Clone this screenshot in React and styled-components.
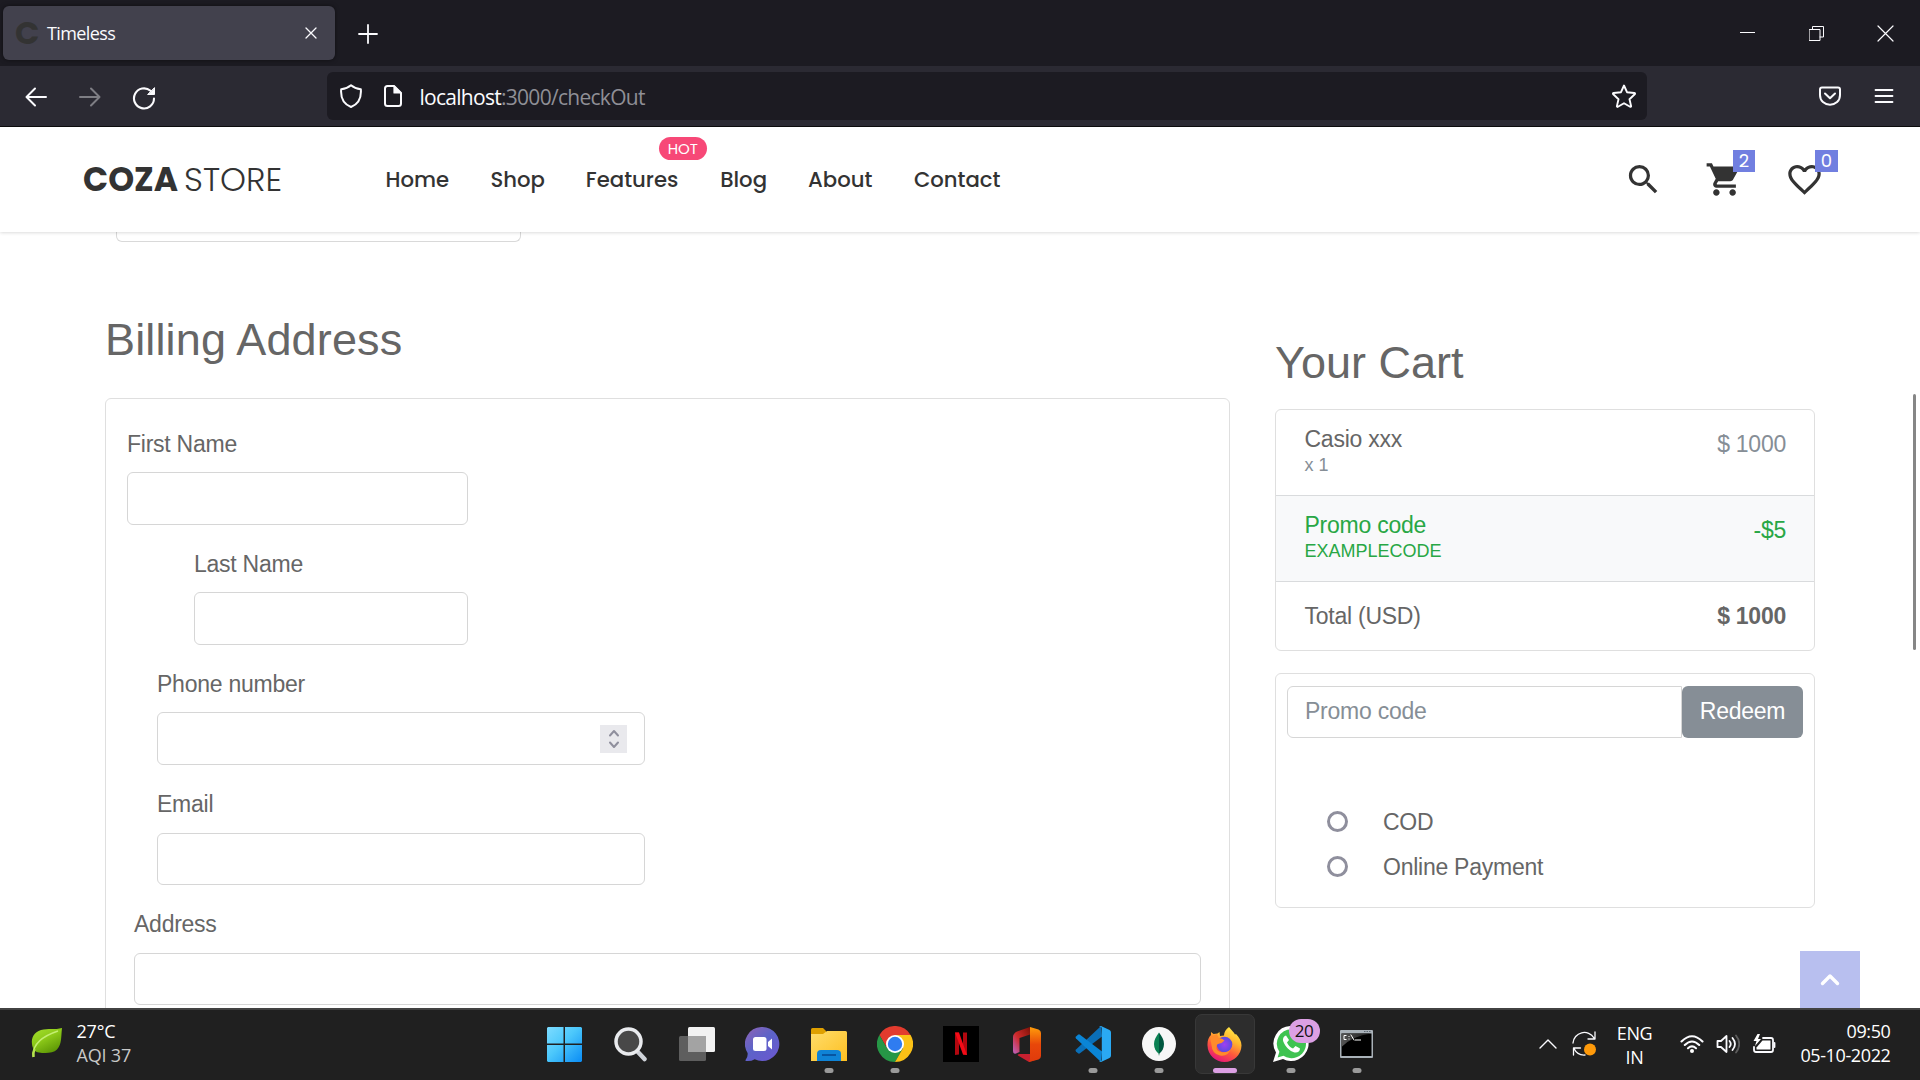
import React from "react";
import styled, { createGlobalStyle, css } from "styled-components";
import { MdSearch, MdShoppingCart, MdFavoriteBorder } from "react-icons/md";

const ui = `"Segoe UI", "Open Sans", "Noto Sans", sans-serif`;
const arial = `Arial, "Liberation Sans", sans-serif`;
const poppins = `Poppins, Inter, sans-serif`;

const Global = createGlobalStyle`
  *, *::before, *::after { box-sizing: border-box; }
  body { margin: 0; background: #fff; overflow: hidden; }
  svg { display: block; flex: none; }
`;

const Screen = styled.div`
  width: 1920px;
  height: 1080px;
  display: flex;
  flex-direction: column;
  overflow: hidden;
`;

/* ---------- Browser chrome ---------- */
const TabBar = styled.div`
  height: 66px;
  flex: none;
  display: flex;
  align-items: center;
  padding-left: 3px;
  background: #1c1b22;
`;
const Tab = styled.div`
  width: 332px;
  height: 54px;
  display: flex;
  align-items: center;
  padding: 0 18.5px 1px 12px;
  border-radius: 6px;
  background: #42414d;
  box-shadow: 0 0 4px rgba(0, 0, 0, 0.5);
`;
const Favicon = styled.span`
  width: 24px;
  margin-right: 8px;
  font: 700 32px/30px ${poppins};
  color: #333;
`;
const TabTitle = styled.span`
  flex: 1;
  font: 18px/24px ${ui};
  letter-spacing: ${(p) => p.$ls || 0}px;
  color: #fbfbfe;
`;
const NewTab = styled.div`
  width: 65px;
  display: flex;
  justify-content: center;
  padding-top: 2px;
`;
const WindowControls = styled.div`
  margin-left: auto;
  display: flex;
`;
const WindowButton = styled.div`
  width: 69px;
  height: 66px;
  display: flex;
  align-items: center;
  justify-content: center;
`;
const Toolbar = styled.div`
  height: 61px;
  flex: none;
  display: flex;
  align-items: center;
  padding: 0 9px;
  background: #2b2a33;
  border-bottom: 1px solid #0c0c0d;
`;
const ToolButton = styled.div`
  width: 54px;
  height: 48px;
  display: flex;
  align-items: center;
  justify-content: center;
  padding-top: ${(p) => p.$drop || 0}px;
  opacity: ${(p) => (p.$dim ? 0.4 : 1)};
`;
const UrlBar = styled.div`
  width: 1320px;
  height: 48px;
  margin: 0 auto 0 156px;
  display: flex;
  align-items: center;
  padding: 0 11px 0 12px;
  border-radius: 6px;
  background: #1c1b22;
`;
const UrlIcons = styled.div`
  display: flex;
  gap: 18px;
  margin-right: 14.5px;
`;
const Url = styled.span`
  flex: 1;
  padding-top: 1px;
  font: 21px/30px ${ui};
  letter-spacing: ${(p) => p.$ls || 0}px;
  color: #8f8f96;
`;
const Host = styled.span`
  color: #fbfbfe;
`;

/* ---------- Page ---------- */
const Page = styled.div`
  position: relative;
  height: 881px;
  flex: none;
  overflow: hidden;
  background: #fff;
`;
const Header = styled.header`
  position: relative;
  z-index: 1;
  height: 105px;
  display: flex;
  align-items: center;
  padding: 0 96px 0 83px;
  background: #fff;
  box-shadow: 0 0 4px rgba(0, 0, 0, 0.22);
`;
const Logo = styled.div`
  width: 302.5px;
  display: flex;
  font: 33px/40px ${poppins};
  color: #333;
`;
const LogoBold = styled.span`
  width: 101px;
  font-weight: 700;
`;
const LogoLight = styled.span`
  font-weight: 300;
`;
const Nav = styled.nav`
  display: flex;
  gap: 42.4px;
`;
const NavLink = styled.a`
  position: relative;
  width: ${(p) => p.$w}px;
  white-space: nowrap;
  font: 500 21.2px/30px ${poppins};
  color: #333;
`;
const HotBadge = styled.span`
  position: absolute;
  left: 73px;
  top: -28px;
  width: 48px;
  height: 23px;
  border-radius: 12px;
  background: #f74877;
  color: #fff;
  text-align: center;
  font: 400 15px/23px ${poppins};
`;
const HeaderIcons = styled.div`
  margin-left: auto;
  display: flex;
  gap: 41px;
  color: #333;
`;
const HeaderIcon = styled.div`
  position: relative;
  width: 39px;
  height: 39px;
  margin-right: ${(p) => p.$right || 0}px;
`;
const CountBadge = styled.span`
  position: absolute;
  left: ${(p) => p.$left}px;
  top: -10px;
  width: ${(p) => p.$w}px;
  height: 22px;
  background: #717fe0;
  color: #fff;
  text-align: center;
  font: 400 18px/22px ${poppins};
`;

const Main = styled.main`
  display: grid;
  grid-template-columns: 1125px 540px;
  column-gap: 45px;
  padding-left: 105px;
  font-family: ${arial};
  font-size: 23px;
  letter-spacing: -0.25px;
  color: #666;
`;
const Column = styled.section`
  padding-top: ${(p) => p.$top || 0}px;
`;
const PreviousField = styled.div`
  width: 405px;
  height: 10px;
  margin: 0 0 71px 11px;
  border: 1px solid #d9d9d9;
  border-top: 0;
  border-radius: 0 0 6px 6px;
`;
const Heading = styled.h2`
  margin: 0 0 ${(p) => p.$gap}px;
  font-size: 45px;
  font-weight: 400;
  line-height: 54px;
  letter-spacing: ${(p) => p.$ls || 0}px;
`;
const card = css`
  border: 1px solid #dfdfdf;
  border-radius: 6px;
`;
const FormCard = styled.form`
  ${card}
  height: 900px;
  padding: 28.6px 27px 0 21px;
`;
const Field = styled.label`
  display: block;
  margin: 0 0 22.9px ${(p) => p.$indent || 0}px;
  width: ${(p) => p.$w}px;
  line-height: 32px;
`;
const control = css`
  height: 52.75px;
  border: 1px solid #d6d6d6;
  background: #fff;
  outline: 0;
`;
const Control = styled.span`
  ${control}
  display: flex;
  align-items: center;
  justify-content: flex-end;
  padding-right: 17px;
  margin-top: 12.5px;
  border-radius: 6px;
`;
const Spinner = styled.span`
  width: 27px;
  height: 28px;
  display: flex;
  align-items: center;
  justify-content: center;
  background: #e9e9ed;
`;

const CartList = styled.ul`
  ${card}
  list-style: none;
  height: 242px;
  margin: 0 0 22px;
  padding: 0;
  overflow: hidden;
`;
const CartRow = styled.li`
  display: flex;
  justify-content: space-between;
  height: ${(p) => (p.$total ? 68 : 86)}px;
  padding: 15px 28px 0 28.5px;
  border-bottom: ${(p) => (p.$total ? 0 : 1)}px solid #d9dbdd;
  line-height: 38px;
  ${(p) => p.$promo && "background: #f8f9fa; color: #28a745;"}
`;
const ItemName = styled.div`
  line-height: 28px;
`;
const ItemNote = styled.small`
  display: block;
  margin-top: 1px;
  font-size: 18px;
  line-height: 22px;
  letter-spacing: 0;
  color: ${(p) => (p.$muted ? "#868e96" : "inherit")};
`;
const Amount = styled.span`
  color: ${(p) => (p.$muted ? "#868e96" : "inherit")};
`;
const PayCard = styled.form`
  ${card}
  height: 235px;
  padding: 12px 11px;
`;
const PromoGroup = styled.div`
  display: flex;
  margin-bottom: 61px;
`;
const PromoInput = styled.input`
  ${control}
  width: 395px;
  height: 52px;
  padding: 0 17px 2px;
  border-radius: 6px 0 0 6px;
  font: 23px ${arial};
  letter-spacing: -0.25px;
  &::placeholder { color: #868e96; opacity: 1; }
`;
const Redeem = styled.button`
  width: 121px;
  height: 52px;
  padding: 0 0 2px;
  border: 0;
  border-radius: 6px;
  background: #868e96;
  color: #fff;
  font: 23px ${arial};
  letter-spacing: -0.25px;
`;
const PayOption = styled.label`
  display: flex;
  align-items: center;
  gap: 35px;
  height: 45px;
  padding-left: 40px;
`;
const PayLabel = styled.span`
  padding-top: 2px;
`;
const Radio = styled.span`
  width: 21px;
  height: 21px;
  border: 3px solid #8f8f9d;
  border-radius: 50%;
`;
const BackToTop = styled.div`
  position: absolute;
  left: 1800px;
  bottom: 0;
  width: 60px;
  height: 57px;
  display: flex;
  align-items: center;
  justify-content: center;
  padding-bottom: 2px;
  background: #b8bfef;
`;
const ScrollThumb = styled.div`
  position: absolute;
  left: 1913px;
  top: 267px;
  width: 3px;
  height: 256px;
  border-radius: 2px;
  background: #868686;
`;

/* ---------- Taskbar ---------- */
const Taskbar = styled.div`
  height: 72px;
  flex: none;
  display: grid;
  grid-template-columns: 531.5px 858px 1fr;
  border-top: 2px solid #424242;
  background: #202020;
  font: 18px/24px ${ui};
  color: #fff;
`;
const Weather = styled.div`
  display: flex;
  align-items: center;
  gap: 14.5px;
  padding: 0 0 4px 31px;
`;
const Stack = styled.div`
  text-align: ${(p) => p.$align || "left"};
  letter-spacing: ${(p) => p.$ls || 0}px;
  white-space: nowrap;
`;
const Muted = styled.div`
  color: #c8c8c8;
`;
const Apps = styled.div`
  display: flex;
`;
const App66 = styled.div`
  position: relative;
  width: 66px;
  height: 70px;
  display: flex;
  align-items: center;
  justify-content: center;
  padding-bottom: 2px;
`;
const ActiveTile = styled.div`
  width: 60px;
  height: 60px;
  display: flex;
  align-items: center;
  justify-content: center;
  border: 1px solid #383838;
  border-radius: 7px;
  background: #2d2d2d;
`;
const Indicator = styled.span`
  position: absolute;
  bottom: 7px;
  left: 50%;
  width: ${(p) => (p.$active ? 24 : 9)}px;
  height: 5px;
  transform: translateX(-50%);
  border-radius: 3px;
  background: ${(p) => (p.$active ? "#dca0e4" : "#9a9a9a")};
`;
const ChatCount = styled.span`
  position: absolute;
  left: 31px;
  top: 9px;
  width: 31px;
  height: 24px;
  border-radius: 12px;
  background: #dca0e4;
  color: #111;
  text-align: center;
  font: 17px/24px ${ui};
  letter-spacing: -0.5px;
`;
const Tray = styled.div`
  display: flex;
  justify-content: flex-end;
  padding-right: 29.5px;
`;
const TrayIcons = styled.div`
  display: flex;
  align-items: center;
  gap: ${(p) => p.$gap}px;
  margin-right: ${(p) => p.$right}px;
  height: 67px;
`;
const TrayText = styled(Stack)`
  width: ${(p) => p.$w}px;
  padding-top: ${(p) => p.$top}px;
  margin-right: ${(p) => p.$right || 0}px;
  display: flex;
  flex-direction: column;
  align-items: ${(p) => (p.$align === "center" ? "center" : "flex-end")};
`;

/* ---------- Drawings ---------- */
const Line = ({ w, h, d, sw = 1.5, color = "#fbfbfe", children }) => (
  <svg width={w} height={h} viewBox={`0 0 ${w} ${h}`} fill="none" stroke={color} strokeWidth={sw} strokeLinecap="round" strokeLinejoin="round">
    {d && <path d={d} />}
    {children}
  </svg>
);

const Leaf = () => (
  <svg width="31" height="32" viewBox="0 0 31 32">
    <defs>
      <linearGradient id="leaf" x1="0" y1="0" x2=".6" y2="1">
        <stop offset="0" stopColor="#a5e02f" /><stop offset=".5" stopColor="#8cc919" /><stop offset="1" stopColor="#5f9906" />
      </linearGradient>
    </defs>
    <path d="M31 1C24 3 17 1 10 3 3 5 0 11 1 17c.500 5 3 8 7 8.500 6 1 14 1 18-3C31 17 30 9 31 1z" fill="url(#leaf)" />
    <path d="M2.500 30C1 19 9 10 27 4" fill="none" stroke="#c4ee72" strokeWidth="1.500" />
    <path d="M2.500 30q-.8-4 1-8" fill="none" stroke="#b4e34c" strokeWidth="2.500" />
  </svg>
);
const Windows = () => (
  <svg width="35" height="35" viewBox="0 0 35 35">
    <defs><linearGradient id="win" gradientUnits="userSpaceOnUse" x1="0" y1="0" x2="35" y2="35"><stop offset="0" stopColor="#7ddcff" /><stop offset=".45" stopColor="#4cc8fb" /><stop offset="1" stopColor="#0a8cf5" /></linearGradient></defs>
    <path fill="url(#win)" d="M1 0h15.500v16.500H0V1zM18 0h16l1 1v15.500H18zM0 18h16.500v17H1l-1-1zM18 18h17v16l-1 1H18z" />
  </svg>
);
const SearchGlass = () => (
  <svg width="33" height="35" viewBox="0 0 33 35">
    <path d="M23 24l7.500 8" stroke="#cfd3d9" strokeWidth="4.500" strokeLinecap="round" />
    <circle cx="14.500" cy="14.500" r="12.500" fill="#484848" stroke="#e9ebee" strokeWidth="3.500" />
  </svg>
);
const TaskView = () => (
  <svg width="36" height="34" viewBox="0 0 36 34">
    <rect x="9" width="27" height="25" rx="1.500" fill="#f2f2f2" />
    <rect y="9" width="27" height="25" rx="1.500" fill="#5e5e5e" />
    <path d="M9 9h18v16H9z" fill="#a3a3a3" />
  </svg>
);
const Chat = () => (
  <svg width="35" height="35" viewBox="0 0 35 35">
    <defs><linearGradient id="chat" x1="0" y1="0" x2=".8" y2="1"><stop offset="0" stopColor="#8f63b4" /><stop offset=".5" stopColor="#5c63c8" /><stop offset="1" stopColor="#6a58cf" /></linearGradient></defs>
    <path fill="url(#chat)" d="M17.500 0a17 17 0 1 1-7.800 32.200Q6 34.500 1 34q-1 0-.3-1.200Q3 30 2.600 26A17 17 0 0 1 17.500 0z" />
    <rect x="8" y="10" width="13.500" height="14" rx="2.500" fill="#fff" />
    <path d="M23 15l4-3.500v11L23 19z" fill="#fff" />
  </svg>
);
const Explorer = () => (
  <svg width="36" height="33" viewBox="0 0 36 33">
    <defs><linearGradient id="fold" x1="0" y1="0" x2="1" y2="1"><stop offset="0" stopColor="#ffdd6b" /><stop offset="1" stopColor="#fdbf21" /></linearGradient></defs>
    <path d="M0 1.500Q0 0 1.500 0H12l3 3v5H0z" fill="#dfa000" />
    <path d="M0 6h12l4-3h18.500Q36 3 36 4.500V33H0z" fill="url(#fold)" />
    <path d="M6 33v-7q0-4 4-4h16q4 0 4 4v7z" fill="#0f83d6" />
    <path d="M11 27h14" stroke="#07519b" strokeWidth="1.800" />
  </svg>
);
const Chrome = () => (
  <svg width="36" height="36" viewBox="0 0 36 36">
    <path d="M18 9H33.600A18 18 0 0 0 2.400 9L10.200 22.500z" fill="#e33b2e" />
    <path d="M25.800 22.500L18 36A18 18 0 0 1 2.400 9l7.800 13.500z" fill="#269746" />
    <path d="M18 9h15.600A18 18 0 0 1 18 36l7.800-13.500z" fill="#fbc116" />
    <circle cx="18" cy="18" r="9" fill="#fff" /><circle cx="18" cy="18" r="7.200" fill="#2f7cf0" />
  </svg>
);
const Netflix = () => (
  <svg width="36" height="36" viewBox="0 0 36 36">
    <path d="M0 0h36v36H0z" />
    <path d="M12 6.500h4v22l-4 .5zM20 6.500h4V29l-4-.5z" fill="#b2070f" />
    <path d="M12 6.500h4L24 29l-4-.5z" fill="#f30b17" />
  </svg>
);
const Office = () => (
  <svg width="28" height="35" viewBox="0 0 28 35">
    <defs>
      <linearGradient id="offA" x1="1" y1="0" x2="0" y2="1"><stop offset="0" stopColor="#7d1207" /><stop offset=".55" stopColor="#cf2a2a" /><stop offset="1" stopColor="#bd66c7" /></linearGradient>
      <linearGradient id="offB" x1="0" y1="0" x2="0" y2="1"><stop offset="0" stopColor="#ff9d0a" /><stop offset=".5" stopColor="#e8470a" /><stop offset="1" stopColor="#e03a0c" /></linearGradient>
    </defs>
    <path d="M17 0L4 4.500Q0 6.500 0 10v14q0 3.500 3 2.500l3.500-1.500V11L17 7.500z" fill="url(#offA)" />
    <path d="M5 28.500L16 35l6-2V27H6.500q-2.500 0-1.500 1.500z" fill="#c72030" />
    <path d="M17 0l8.500 2.500Q28 3.500 28 6v23q0 2.500-2.500 3.500L16 35l1-3z" fill="url(#offB)" />
  </svg>
);
const VsCode = () => (
  <svg width="36" height="36" viewBox="0 0 36 36">
    <path d="M26 0L1 23.500q-1 1 0 2L3 27.300q1 .7 2 0L27 10.500z" fill="#0a6fb8" />
    <path d="M26 36L1 12.500q-1-1 0-2L3 8.700q1-.7 2 0L27 25.500z" fill="#0a85d6" />
    <path d="M26 0l8.500 4Q36 4.800 36 6.500v23q0 1.700-1.500 2.500L26 36q-1.300.3-2-.5 2.800.6 2.800-2V2.500Q26.800 0 24 .5q.7-.8 2-.5z" fill="#2aa9f3" />
  </svg>
);
const Mongo = () => (
  <svg width="34" height="34" viewBox="0 0 34 34">
    <circle cx="17" cy="17" r="17" fill="#f7f7f7" />
    <path d="M17 5.500c3 4 5 7.500 5 11.500 0 4.500-2 7.500-4.500 9.500L17 29z" fill="#00573f" />
    <path d="M17 5.500c-3 4-5 7.500-5 11.500 0 4.500 2 7.500 4.500 9.500L17 29z" fill="#0b8153" />
  </svg>
);
const Firefox = () => (
  <svg width="35" height="35" viewBox="0 0 35 35">
    <defs>
      <linearGradient id="ff" x1=".8" y1="0" x2=".3" y2="1"><stop offset="0" stopColor="#fff04a" /><stop offset=".35" stopColor="#ffb52e" /><stop offset=".65" stopColor="#ff5a3c" /><stop offset="1" stopColor="#e5127c" /></linearGradient>
      <radialGradient id="ffp"><stop offset="0" stopColor="#a03ff0" /><stop offset="1" stopColor="#5a4be0" /></radialGradient>
    </defs>
    <path d="M22 0c2 3 5 5 6 7.500l1-.5c3 3 5.500 7 5.500 11.500A17 17 0 0 1 17.500 35 17 17 0 0 1 .5 18.500C.3 14 1.500 10 4 8V5l2.500 2 4-.5 2-1.500.5 4 4-.5C17 5 19 2 22 0z" fill="url(#ff)" />
    <circle cx="17.500" cy="17.500" r="7.800" fill="url(#ffp)" />
    <path d="M3 10l7-3 1.500 4q4 0 6 2.500-2 2.500-5 3-3 .5-3 3Q9 24 14 25q7 1 9.500-3Q21 30 13 28.500 5 27 4.500 18z" fill="#ff8b2b" />
  </svg>
);
const WhatsApp = () => (
  <svg width="36" height="36" viewBox="0 0 36 36">
    <path d="M18.500 0A17.500 17.500 0 1 1 10 33L0 36l3-9.500A17.500 17.500 0 0 1 18.500 0z" fill="#fff" />
    <path d="M18.500 3.200a14.500 14.500 0 1 1-8 26.600l-5.900 1.700 1.800-5.700A14.500 14.500 0 0 1 18.500 3.200z" fill="#3fc351" />
    <path d="M13 9.500c-3 1-3.500 4-2.500 6.500 2 5 6 9 11 10.500 3 .6 5.500-1 5.500-4l-4.500-2.500-2.500 2.500c-3-1-5-3.500-6-6l2-2.500z" fill="#fff" />
  </svg>
);
const Terminal = () => (
  <svg width="33" height="28" viewBox="0 0 33 28">
    <defs><linearGradient id="cmd" x1="0" y1="0" x2="1" y2="0"><stop offset="0" stopColor="#555" /><stop offset="1" stopColor="#1a1a1a" /></linearGradient></defs>
    <rect width="33" height="28" rx="1" fill="#a9b1b8" />
    <path d="M1.500 3.500h30V26h-30z" />
    <path d="M1.500 3.500h30Q12 6 1.500 17z" fill="url(#cmd)" />
    <path d="M6 5.500H4v4h2M9 6.500v0M9 9v0M11 5l3 5M15.500 10h5" fill="none" stroke="#fff" strokeWidth="1" strokeLinecap="square" />
    <path d="M24 1.500h7" stroke="#59646e" strokeDasharray="1.500 1" />
  </svg>
);

const apps = [
  { icon: Windows }, { icon: SearchGlass }, { icon: TaskView }, { icon: Chat },
  { icon: Explorer, open: true }, { icon: Chrome, open: true }, { icon: Netflix }, { icon: Office },
  { icon: VsCode, open: true }, { icon: Mongo, open: true }, { icon: Firefox, open: true, active: true },
  { icon: WhatsApp, open: true, count: 20 }, { icon: Terminal, open: true },
];
const links = [
  { label: "Home", w: 62.5 }, { label: "Shop", w: 53 }, { label: "Features", w: 92, hot: true },
  { label: "Blog", w: 45.5 }, { label: "About", w: 63.5 }, { label: "Contact", w: 87 },
];
const fields = [
  { label: "First Name", w: 341 },
  { label: "Last Name", w: 274, indent: 67 },
  { label: "Phone number", w: 488, indent: 30, spinner: true },
  { label: "Email", w: 488, indent: 30 },
  { label: "Address", w: 1067, indent: 7 },
];

export default function App() {
  return (
    <Screen>
      <Global />
      <TabBar>
        <Tab>
          <Favicon>C</Favicon>
          <TabTitle $ls={-0.6}>Timeless</TabTitle>
          <Line w={12} h={12} sw={1.3} d="M1 1l10 10M11 1L1 11" />
        </Tab>
        <NewTab><Line w={20} h={20} sw={1.8} d="M10 1v18M1 10h18" /></NewTab>
        <WindowControls>
          <WindowButton><Line w={15} h={3} sw={1} d="M0 .5h15" /></WindowButton>
          <WindowButton><Line w={15} h={15} sw={1} d="M.5 3.500h10.500v11H.5zM3.500 3.500v-3h11v10.500h-3.500" /></WindowButton>
          <WindowButton><Line w={17} h={17} sw={1.2} d="M1 1l15 15M16 1L1 16" /></WindowButton>
        </WindowControls>
      </TabBar>
      <Toolbar>
        <ToolButton $drop={2}><Line w={22} h={20} sw={2} d="M10 1.500L1.500 10l8.500 8.500M2 10h19" /></ToolButton>
        <ToolButton $drop={2} $dim><Line w={22} h={20} sw={2} d="M12 1.500l8.500 8.500-8.500 8.500M20 10H1" /></ToolButton>
        <ToolButton $drop={3}>
          <Line w={24} h={24} sw={2.1} d="M22 12.500a10 10 0 1 1-3.500-7.700"><path d="M22.500 2v6.500H16z" fill="#fbfbfe" strokeWidth="1" /></Line>
        </ToolButton>
        <UrlBar>
          <UrlIcons>
            <Line w={24} h={24} sw={2} d="M12 1.200c2.500 2.200 6 3.500 9.800 4C22.500 13 19.500 20 12 23 4.500 20 1.500 13 2.200 5.200 6 4.700 9.500 3.400 12 1.200z" />
            <Line w={24} h={24} sw={2} d="M13 2H6.500Q4 2 4 4.500v15Q4 22 6.500 22h11q2.500 0 2.500-2.500V9z"><path d="M13 2v7h7z" fill="#fbfbfe" strokeWidth="1.200" /></Line>
          </UrlIcons>
          <Url $ls={-0.72}><Host>localhost</Host>:3000/checkOut</Url>
          <Line w={24} h={24} sw={1.9} d="M12 1.500l3 6.700 7.300.8c.8.100 1 .8.400 1.300l-5.200 4.900 1.600 6.900c.1.600-.5 1-1 .7L12 19.300l-6.100 3.500c-.5.300-1.100-.1-1-.7l1.600-6.900-5.200-4.900c-.6-.5-.4-1.200.4-1.300L9 8.200z" />
        </UrlBar>
        <ToolButton>
          <Line w={22} h={20} sw={2} d="M3 1.500h16Q21 1.500 21 3.500V9c0 6-4.500 9.700-10 9.700S1 15 1 9V3.500Q1 1.500 3 1.500zM6 7.500l5 4.800 5-4.800" />
        </ToolButton>
        <ToolButton><Line w={20} h={17} sw={1.8} d="M1.500 2h17M1.500 8h17M1.500 14h17" /></ToolButton>
      </Toolbar>

      <Page>
        <Header>
          <Logo><LogoBold>COZA</LogoBold><LogoLight>STORE</LogoLight></Logo>
          <Nav>
            {links.map((l) => (
              <NavLink key={l.label} $w={l.w}>{l.label}{l.hot && <HotBadge>HOT</HotBadge>}</NavLink>
            ))}
          </Nav>
          <HeaderIcons>
            <HeaderIcon $right={1}><MdSearch size={39} /></HeaderIcon>
            <HeaderIcon><MdShoppingCart size={39} /><CountBadge $left={28} $w={22}>2</CountBadge></HeaderIcon>
            <HeaderIcon><MdFavoriteBorder size={39} /><CountBadge $left={30} $w={23}>0</CountBadge></HeaderIcon>
          </HeaderIcons>
        </Header>
        <Main>
          <Column>
            <PreviousField />
            <Heading $gap={31} $ls={0.15}>Billing Address</Heading>
            <FormCard>
              {fields.map((f) => (
                <Field key={f.label} $w={f.w} $indent={f.indent}>
                  {f.label}
                  <Control>
                    {f.spinner && <Spinner><Line w={12} h={20} sw={2} color="#8f8f9d" d="M2 6.500l4-4.500 4 4.500M2 13.500L6 18l4-4.500" /></Spinner>}
                  </Control>
                </Field>
              ))}
            </FormCard>
          </Column>
          <Column $top={104}>
            <Heading $gap={19}>Your Cart</Heading>
            <CartList>
              <CartRow>
                <div><ItemName>Casio xxx</ItemName><ItemNote $muted>x 1</ItemNote></div>
                <Amount $muted>$ 1000</Amount>
              </CartRow>
              <CartRow $promo>
                <div><ItemName>Promo code</ItemName><ItemNote>EXAMPLECODE</ItemNote></div>
                <Amount>-$5</Amount>
              </CartRow>
              <CartRow $total><span>Total (USD)</span><strong>$ 1000</strong></CartRow>
            </CartList>
            <PayCard>
              <PromoGroup><PromoInput placeholder="Promo code" /><Redeem type="button">Redeem</Redeem></PromoGroup>
              <PayOption><Radio /><PayLabel>COD</PayLabel></PayOption>
              <PayOption><Radio /><PayLabel>Online Payment</PayLabel></PayOption>
            </PayCard>
          </Column>
        </Main>
        <BackToTop><Line w={20} h={14} sw={3.4} color="#fff" d="M2.500 11.500L10 4l7.500 7.500" /></BackToTop>
        <ScrollThumb />
      </Page>

      <Taskbar>
        <Weather>
          <Leaf />
          <Stack $ls={-0.2}>27°C<Muted>AQI 37</Muted></Stack>
        </Weather>
        <Apps>
          {apps.map(({ icon: Icon, open, active, count }, i) => (
            <App66 key={i}>
              {active ? <ActiveTile><Icon /></ActiveTile> : <Icon />}
              {open && <Indicator $active={active} />}
              {count && <ChatCount>{count}</ChatCount>}
            </App66>
          ))}
        </Apps>
        <Tray>
          <TrayIcons $gap={15} $right={22}>
            <Line w={18} h={10} sw={1.4} d="M1 9l8-8 8 8" />
            <Line w={24} h={25} sw={1.3} d="M1 12A11.300 11.300 0 0 1 22 7M23 1v7h-7M2 17.500A11.300 11.300 0 0 0 13 24M1.500 24v-7h7">
              <circle cx="18" cy="18.500" r="6" fill="#ff9a0a" stroke="none" />
            </Line>
          </TrayIcons>
          <TrayText $w={34} $top={11} $right={28} $align="center" $ls={-0.4}><span>ENG</span><span>IN</span></TrayText>
          <TrayIcons $gap={12} $right={25}>
            <Line w={24} h={20} sw={2.1} d="M1.500 7.500Q12-3 22.500 7.500M4.800 11Q12 4 19.200 11M8 14.200q4-3.500 8 0"><circle cx="12" cy="17" r="2" fill="#fff" stroke="none" /></Line>
            <Line w={24} h={20} sw={1.8} d="M1.500 7v6H5l5.500 5V2L5 7zM13.500 7q2.500 3 0 6M16.500 4q5 6 0 12"><path d="M20 1.500q6.500 8.500 0 17" stroke="#5c5c5c" /></Line>
            <Line w={24} h={20} sw={1.8} d="M11 4h8q2 0 2 2v10q0 2-2 2H4q-2 0-2-2v-3"><path d="M10.500 6.500H18.500v9H4.500V13.500z" fill="#fff" stroke="none" /><path d="M22.500 9v4" /><path d="M5.500 0L1.500 7h3L3 12l6-7H6L8 0z" fill="#fff" stroke="none" /></Line>
          </TrayIcons>
          <TrayText $w={90} $top={9} $ls={-0.38}><span>09:50</span><span>05-10-2022</span></TrayText>
        </Tray>
      </Taskbar>
    </Screen>
  );
}
